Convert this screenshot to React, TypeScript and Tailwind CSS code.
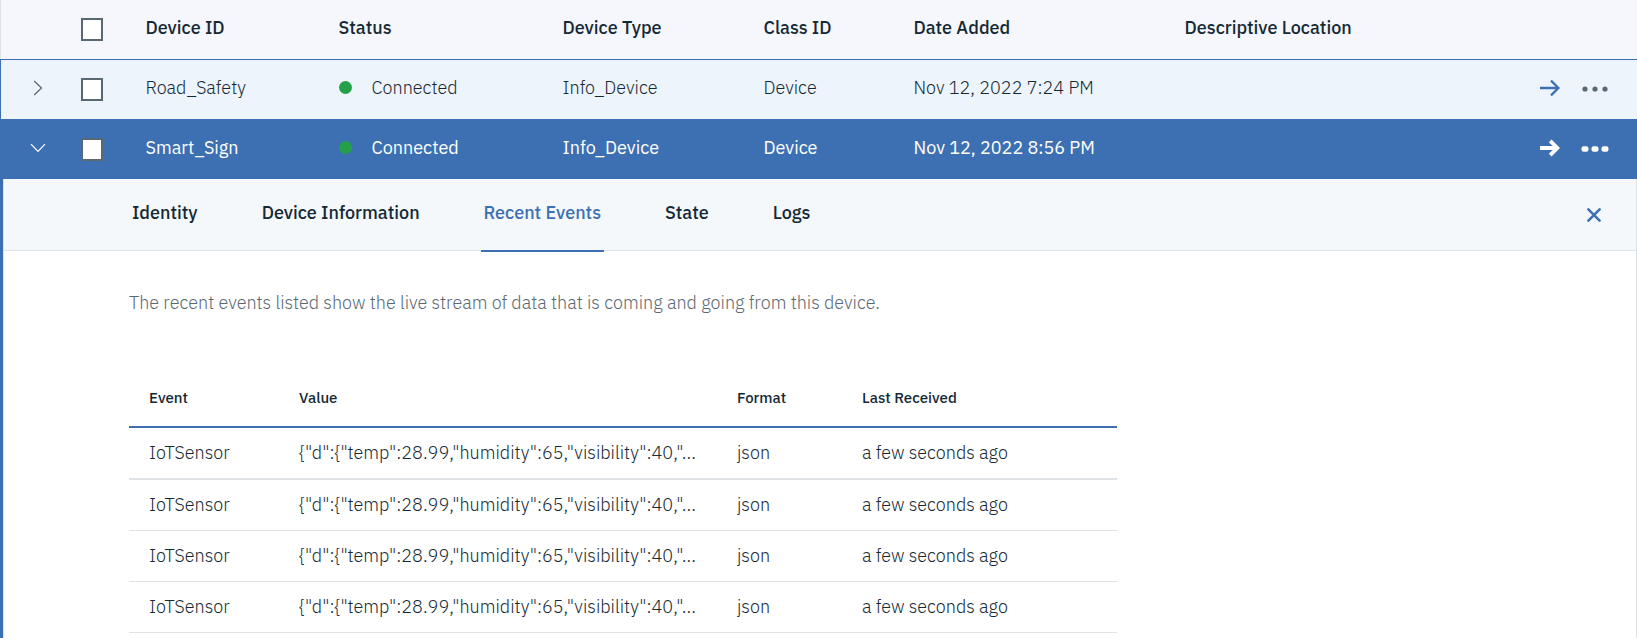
import { useState } from 'react';

type Device = {
  id: string;
  status: string;
  type: string;
  classId: string;
  added: string;
};

const devices: Device[] = [
  { id: 'Road_Safety', status: 'Connected', type: 'Info_Device', classId: 'Device', added: 'Nov 12, 2022 7:24 PM' },
  { id: 'Smart_Sign', status: 'Connected', type: 'Info_Device', classId: 'Device', added: 'Nov 12, 2022 8:56 PM' },
];

const tabs = ['Identity', 'Device Information', 'Recent Events', 'State', 'Logs'];

const events = [1, 2, 3, 4].map((key) => ({
  key,
  event: 'IoTSensor',
  value: '{"d":{"temp":28.99,"humidity":65,"visibility":40,"...',
  format: 'json',
  received: 'a few seconds ago',
}));

function Checkbox({ label }: { label: string }) {
  return (
    <input
      type="checkbox"
      aria-label={label}
      className="mt-1 block h-[23px] w-[22px] appearance-none border-2 border-[#5a6872] bg-white checked:bg-[#3d70b2]"
    />
  );
}

function Chevron({ open }: { open: boolean }) {
  return (
    <svg viewBox="0 0 16 16" className="size-4" fill="none" stroke="currentColor" strokeWidth="1.2">
      <path d={open ? 'M1 4.2 8 11.5 15 4.2' : 'M4.2 1 11.5 8 4.2 15'} />
    </svg>
  );
}

function Arrow({ heavy }: { heavy: boolean }) {
  return (
    <svg viewBox="0 0 20 18" className="h-[18px] w-5" fill="none" stroke="currentColor" strokeWidth={heavy ? 3.8 : 2.3}>
      <path d={heavy ? 'M0 9H17M10.2 1.8 17.4 9 10.2 16.2' : 'M0 9H18M11 1.6 18.4 9 11 16.4'} />
    </svg>
  );
}

function Dots({ heavy }: { heavy: boolean }) {
  return (
    <svg viewBox="0 0 28 8" className="h-2 w-7" fill="currentColor">
      {[4, 14, 24].map((cx) =>
        heavy ? (
          <rect key={cx} x={cx - 3.5} y="1.2" width="7" height="5.6" rx="2.2" />
        ) : (
          <circle key={cx} cx={cx} cy="4" r="2.6" />
        ),
      )}
    </svg>
  );
}

function DeviceRow({ device, open }: { device: Device; open: boolean }) {
  return (
    <tr
      className={
        open
          ? 'h-[60px] border-l border-[#3d70b2] bg-[#3d70b2] font-normal text-white *:pb-[3px]'
          : 'h-[60px] border-l border-[#3d70b2] bg-[#edf4fc] text-[#152935] *:pb-[3px]'
      }
    >
      <td>
        <button
          type="button"
          aria-label={open ? 'Collapse' : 'Expand'}
          className={open ? 'ml-[29px] block text-white' : 'ml-[29px] block text-[#5a6872]'}
        >
          <Chevron open={open} />
        </button>
      </td>
      <td>
        <Checkbox label={'Select ' + device.id} />
      </td>
      <td>{device.id}</td>
      <td>
        <span className="flex items-center gap-5">
          <span className="size-[13px] rounded-full bg-[#24a148]" />
          {device.status}
        </span>
      </td>
      <td>{device.type}</td>
      <td>{device.classId}</td>
      <td>{device.added}</td>
      <td />
      <td>
        <span className="flex items-center gap-[21px]">
          <button type="button" aria-label="Open device" className={open ? '' : 'text-[#3d70b2]'}>
            <Arrow heavy={open} />
          </button>
          <button type="button" aria-label="More actions" className={open ? 'mt-[3px]' : 'mt-[3px] text-[#5a6872]'}>
            <Dots heavy={open} />
          </button>
        </span>
      </td>
    </tr>
  );
}

function RecentEvents() {
  return (
    <div className="pr-8 pb-8 pl-[125px]">
      <p className="pt-10 text-[#5a6872]">
        The recent events listed show the live stream of data that is coming and going from this device.
      </p>
      <table className="mt-[54px] w-full max-w-[988px] table-fixed border-collapse text-left">
        <colgroup>
          <col className="w-[150px]" />
          <col className="w-[438px]" />
          <col className="w-[125px]" />
          <col />
        </colgroup>
        <thead>
          <tr className="h-[58px] border-b-2 border-[#3d70b2] text-[15px]">
            {['Event', 'Value', 'Format', 'Last Received'].map((name) => (
              <th key={name} scope="col" className="pl-5 font-medium">
                {name}
              </th>
            ))}
          </tr>
        </thead>
        <tbody>
          {events.map((row) => (
            <tr key={row.key} className="h-[51px] border-b border-[#dfe3e6] first:h-[52px] first:border-b-2">
              <td className="pl-5">{row.event}</td>
              <td className="truncate pl-5">{row.value}</td>
              <td className="pl-5">{row.format}</td>
              <td className="pl-5">{row.received}</td>
            </tr>
          ))}
        </tbody>
      </table>
    </div>
  );
}

function DeviceDetail() {
  const [active, setActive] = useState('Recent Events');
  return (
    <div className="border-l-2 border-[#3d70b2]">
      <div className="min-h-screen border-x border-[#dfe3e6] bg-white">
        <div className="flex h-[72px] items-stretch justify-between border-b border-[#dfe3e6] bg-[#f4f8fb] pr-[35px] pl-[125px]">
          <div role="tablist" className="-mb-[2px] flex gap-[58px]">
            {tabs.map((tab) => (
              <button
                key={tab}
                type="button"
                role="tab"
                aria-selected={tab === active}
                onClick={() => setActive(tab)}
                className={
                  tab === active
                    ? 'border-b-2 border-[#3d70b2] px-[3px] pb-1 font-medium text-[#3d70b2]'
                    : 'border-b-2 border-transparent px-[3px] pb-1 font-medium'
                }
              >
                {tab}
              </button>
            ))}
          </div>
          <button type="button" aria-label="Close" className="text-[#3d70b2]">
            <svg viewBox="0 0 14 14" className="size-[14px]" fill="none" stroke="currentColor" strokeWidth="2.6" strokeLinecap="round">
              <path d="M1.4 1.4 12.6 12.6M12.6 1.4 1.4 12.6" />
            </svg>
          </button>
        </div>
        <RecentEvents />
      </div>
    </div>
  );
}

export default function App() {
  return (
    <main className="h-screen overflow-hidden bg-white font-['IBM_Plex_Sans','Roboto',sans-serif] text-lg leading-6 font-light text-[#152935]">
      <table className="w-full table-fixed border-collapse text-left">
        <colgroup>
          <col className="w-[80px]" />
          <col className="w-[65px]" />
          <col className="w-[193px]" />
          <col className="w-[224px]" />
          <col className="w-[201px]" />
          <col className="w-[150px]" />
          <col className="w-[271px]" />
          <col />
          <col className="w-[97px]" />
        </colgroup>
        <thead>
          <tr className="h-[59px] border-b border-l border-b-[#3d70b2] border-l-[#dfe3e6] bg-[#f5f7fc] *:pb-[3px]">
            <td />
            <td>
              <Checkbox label="Select all devices" />
            </td>
            {['Device ID', 'Status', 'Device Type', 'Class ID', 'Date Added', 'Descriptive Location'].map((name) => (
              <th key={name} scope="col" className="font-medium">
                {name}
              </th>
            ))}
            <td />
          </tr>
        </thead>
        <tbody>
          <DeviceRow device={devices[0]} open={false} />
          <DeviceRow device={devices[1]} open />
          <tr className="border-l border-[#3d70b2]">
            <td colSpan={9}>
              <DeviceDetail />
            </td>
          </tr>
        </tbody>
      </table>
    </main>
  );
}
